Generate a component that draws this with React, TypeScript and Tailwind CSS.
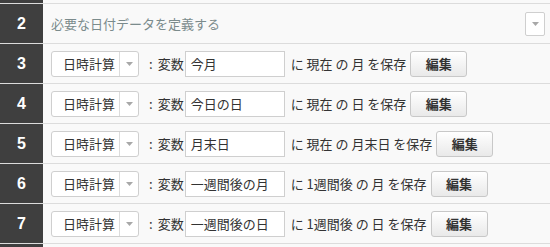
import React from "react";

type Row = {
  no: number;
  name: string;
  base: string;
  unit: string;
};

const rows: Row[] = [
  { no: 3, name: "今月", base: "現在", unit: "月" },
  { no: 4, name: "今日の日", base: "現在", unit: "日" },
  { no: 5, name: "月末日", base: "現在", unit: "月末日" },
  { no: 6, name: "一週間後の月", base: "1週間後", unit: "月" },
  { no: 7, name: "一週間後の日", base: "1週間後", unit: "日" },
];

const Caret = () => (
  <svg width="7" height="4" viewBox="0 0 7 4" className="block">
    <path d="M0 0 H7 L3.5 4 Z" fill="#a8a8a8" />
  </svg>
);

const NumCell = ({ no }: { no: number }) => (
  <div className="w-[43px] shrink-0 bg-[#3f3f3f] flex items-center justify-center text-white font-bold text-[16px] font-['Liberation_Sans',sans-serif]">
    {no}
  </div>
);

const StepRow = ({ row }: { row: Row }) => (
  <div className="flex h-[40px] border-t border-[#dcdcdc]">
    <NumCell no={row.no} />
    <div className="flex-1 flex items-center pl-[8px] text-[13px] text-[#333]">
      <div className="flex h-[26px] w-[88px] bg-white border border-[#cfcfcf] rounded-[3px]">
        <div className="flex-1 flex items-center pl-[11px]">日時計算</div>
        <div className="w-[19px] border-l border-[#dcdcdc] flex items-center justify-center">
          <Caret />
        </div>
      </div>
      <span className="ml-[10px]">:</span>
      <span className="ml-[5px]">変数</span>
      <div className="ml-[1px] h-[26px] w-[100px] bg-white border border-[#cfcfcf] flex items-center pl-[5px]">
        {row.name}
      </div>
      <span className="ml-[6px] whitespace-pre">
        {"に " + row.base + " の " + row.unit + " を保存"}
      </span>
      <button className="ml-[4px] h-[26px] w-[57px] rounded-[3px] border border-[#c8c8c8] bg-gradient-to-b from-white to-[#e9e9e9] font-bold text-[13px] text-[#333] flex items-center justify-center">
        編集
      </button>
    </div>
  </div>
);

export default function App() {
  return (
    <div className="w-[550px] h-[247px] overflow-hidden bg-[#f9f9f9] font-['Noto_Sans_CJK_JP',sans-serif]">
      <div className="flex h-[3px]">
        <div className="w-[43px] bg-[#3f3f3f]" />
      </div>
      <div className="flex h-[40px] border-t border-[#dcdcdc]">
        <NumCell no={2} />
        <div className="flex-1 flex items-center pl-[8px] pr-[5px] text-[13px] text-[#7b8b8c]">
          <span className="flex-1">必要な日付データを定義する</span>
          <div className="w-[20px] h-[24px] bg-white border border-[#cfcfcf] rounded-[2px] flex items-center justify-center">
            <Caret />
          </div>
        </div>
      </div>
      {rows.map((r) => (
        <StepRow key={r.no} row={r} />
      ))}
      <div className="flex h-[10px] border-t border-[#dcdcdc]">
        <div className="w-[43px] bg-[#3f3f3f]" />
      </div>
    </div>
  );
}
